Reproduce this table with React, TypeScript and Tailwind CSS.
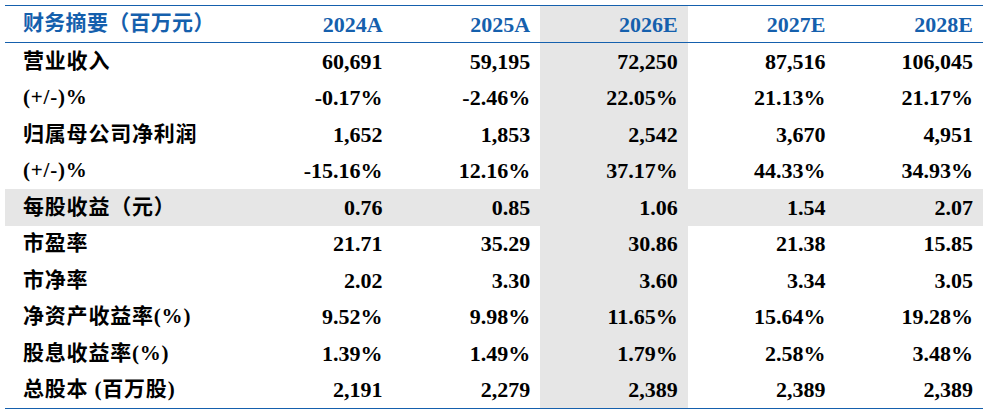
const COLS = ['2024A', '2025A', '2026E', '2027E', '2028E']

// rows of the summary table; shaded row marked with `shade`
const ROWS: { label: string; values: string[]; shade?: boolean }[] = [
  { label: '营业收入', values: ['60,691', '59,195', '72,250', '87,516', '106,045'] },
  { label: '(+/-)%', values: ['-0.17%', '-2.46%', '22.05%', '21.13%', '21.17%'] },
  { label: '归属母公司净利润', values: ['1,652', '1,853', '2,542', '3,670', '4,951'] },
  { label: '(+/-)%', values: ['-15.16%', '12.16%', '37.17%', '44.33%', '34.93%'] },
  { label: '每股收益（元）', values: ['0.76', '0.85', '1.06', '1.54', '2.07'], shade: true },
  { label: '市盈率', values: ['21.71', '35.29', '30.86', '21.38', '15.85'] },
  { label: '市净率', values: ['2.02', '3.30', '3.60', '3.34', '3.05'] },
  { label: '净资产收益率(%)', values: ['9.52%', '9.98%', '11.65%', '15.64%', '19.28%'] },
  { label: '股息收益率(%)', values: ['1.39%', '1.49%', '1.79%', '2.58%', '3.48%'] },
  { label: '总股本 (百万股)', values: ['2,191', '2,279', '2,389', '2,389', '2,389'] },
]

const font = { fontFamily: '"Liberation Serif", "Noto Sans CJK SC", serif' }

export default function App() {
  return (
    <div className="w-[985px] h-[412px] bg-white pt-[5px] pl-[5px]" style={font}>
      <div className="w-[978px] border-t border-b border-[#1560ad]">
        {/* header */}
        <div className="grid grid-cols-[240px_repeat(5,1fr)] h-[37px] border-b border-[#1560ad] font-bold text-[#1560ad]">
          <div className="flex items-center pl-[18px] text-[21px] tracking-[0.3px]">财务摘要（百万元）</div>
          {COLS.map((c, i) => (
            <div
              key={c}
              className={
                'flex items-center justify-end pr-[10px] text-[22px] ' +
                (i === 2 ? 'bg-[#e6e6e6]' : '')
              }
            >
              {c}
            </div>
          ))}
        </div>

        {ROWS.map((r, ri) => (
          <div
            key={ri}
            className={
              'grid grid-cols-[240px_repeat(5,1fr)] h-[36.5px] font-bold text-black ' +
              (r.shade ? 'bg-[#e6e6e6]' : '')
            }
          >
            <div className="flex items-center pl-[18px] text-[21px] tracking-[0.8px]">{r.label}</div>
            {r.values.map((v, i) => (
              <div
                key={i}
                className={
                  'flex items-center justify-end pr-[10px] text-[22px] ' +
                  (i === 2 ? 'bg-[#e6e6e6]' : '')
                }
              >
                {v}
              </div>
            ))}
          </div>
        ))}
      </div>
    </div>
  )
}
